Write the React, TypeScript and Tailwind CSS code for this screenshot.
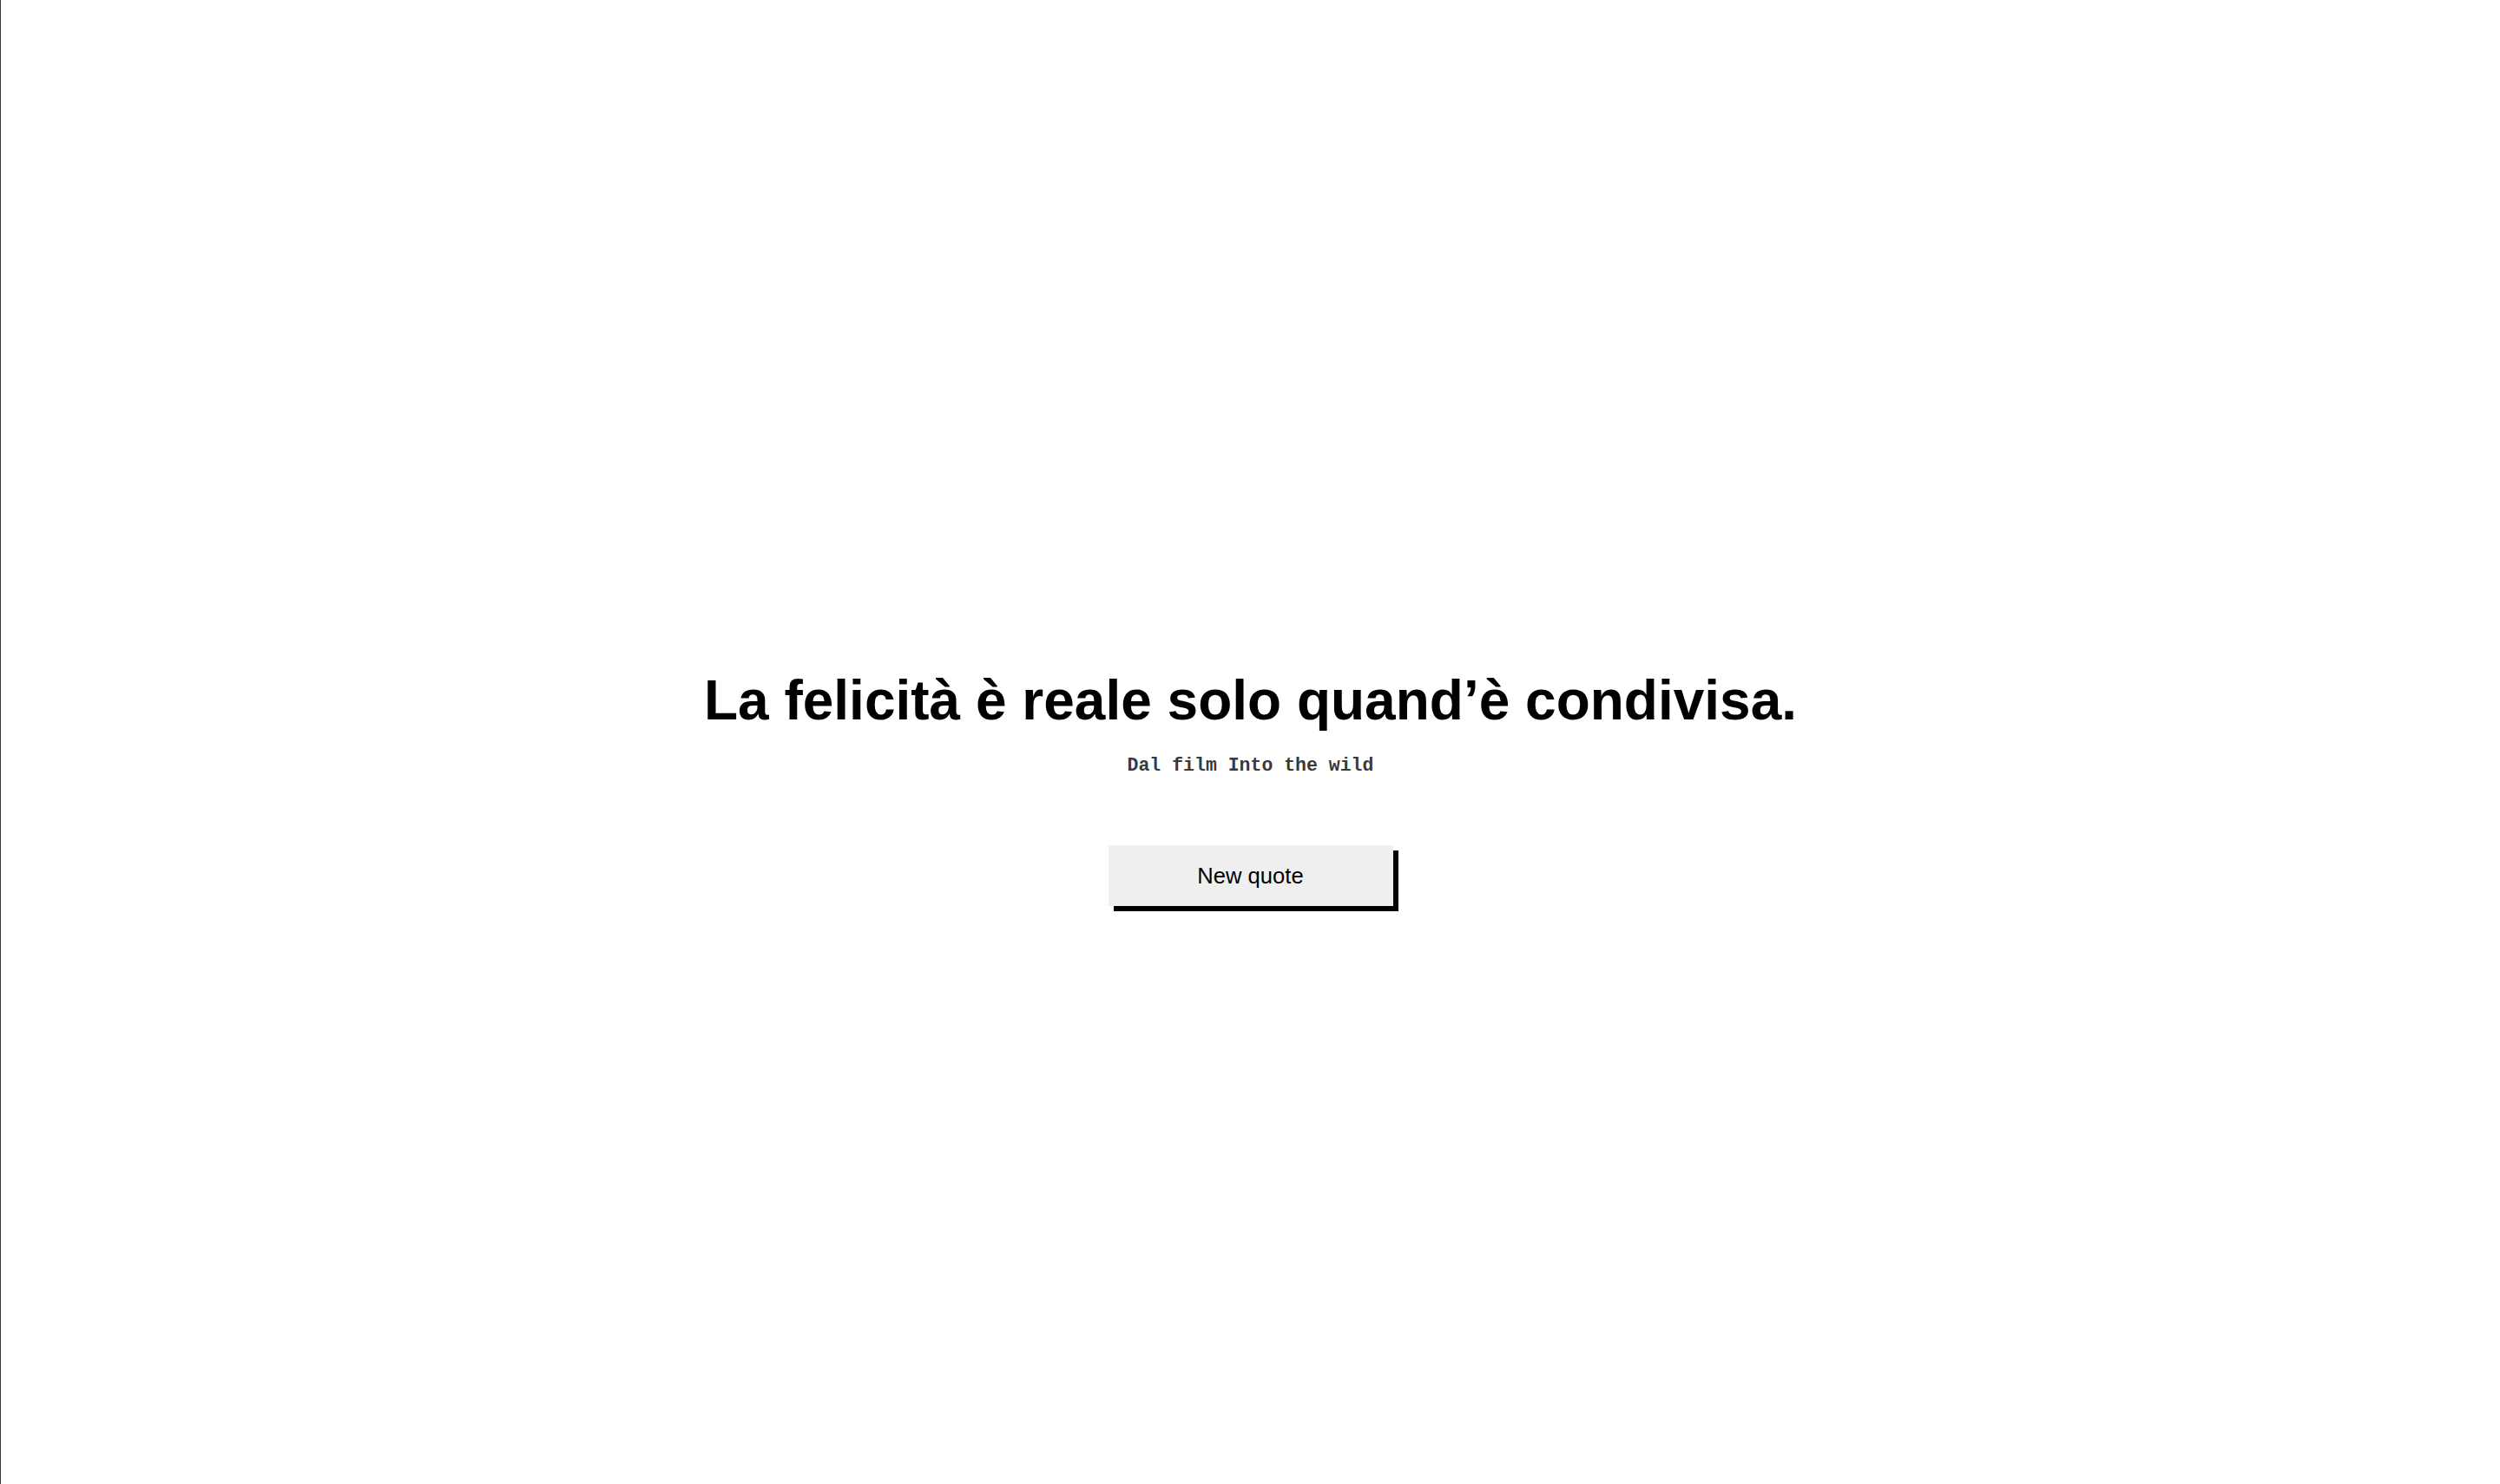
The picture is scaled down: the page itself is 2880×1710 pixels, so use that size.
export default function App() {
  return (
    <div className="flex h-[1710px] w-full flex-col items-center border-l border-[#3a3a3a] bg-white pt-[759px]">
      <h1 className="font-['Liberation_Sans',Arial,sans-serif] text-[64px] font-bold leading-normal text-black">
        La felicità è reale solo quand’è condivisa.
      </h1>
      <p className="mt-[11px] font-['Liberation_Mono','Courier_New',monospace] text-[21.5px] font-bold leading-normal text-[#3a3a3a]">
        Dal film Into the wild
      </p>
      <button
        type="button"
        className="mt-[76px] h-[70px] w-[328px] bg-[#efefef] font-['Liberation_Sans',Arial,sans-serif] text-[25.6px] text-black shadow-[6px_6px_0_#000]"
      >
        New quote
      </button>
    </div>
  )
}
